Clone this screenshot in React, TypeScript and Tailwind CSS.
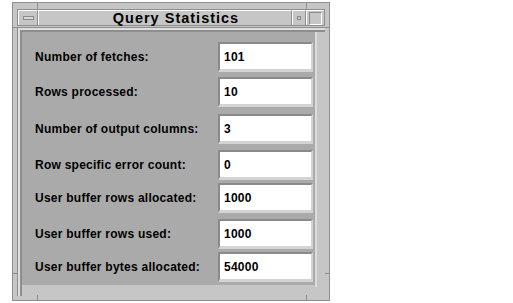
import React from "react";

const rows: { label: string; value: string; gap: string }[] = [
  { label: "Number of fetches:", value: "101", gap: "mt-0" },
  { label: "Rows processed:", value: "10", gap: "mt-[5px]" },
  { label: "Number of output columns:", value: "3", gap: "mt-[7px]" },
  { label: "Row specific error count:", value: "0", gap: "mt-[6px]" },
  { label: "User buffer rows allocated:", value: "1000", gap: "mt-[3px]" },
  { label: "User buffer rows used:", value: "1000", gap: "mt-[6px]" },
  { label: "User buffer bytes allocated:", value: "54000", gap: "mt-[3px]" },
];

const StatRow = ({ label, value, gap }: { label: string; value: string; gap: string }) => (
  <div className={`flex items-center h-[30px] ${gap}`}>
    <span className="w-[196px] pl-[13px] text-[12px] font-bold text-black leading-none tracking-[0.25px]">{label}</span>
    <div className="w-[95px] h-[30px] bg-white border-t-2 border-l-2 border-b-[3px] border-r-2 border-t-[#8a8a8a] border-l-[#8a8a8a] border-b-[#d4d4d4] border-r-[#d4d4d4] flex items-center pl-[4px]">
      <span className="text-[12px] font-bold text-black leading-none tracking-[0.25px]">{value}</span>
    </div>
  </div>
);

const Btn = ({ w, children, last }: { w: string; children?: React.ReactNode; last?: boolean }) => (
  <div className={`${w} flex items-center justify-center border-t border-l border-t-white border-l-white ${last ? "" : "border-r border-r-[#8e8e8e]"}`}>
    {children}
  </div>
);

export default function App() {
  return (
    <div className="w-[513px] h-[303px] bg-white pt-[2px] pl-[12px]" style={{ fontFamily: '"Liberation Sans", Arial, sans-serif' }}>
      {/* window frame */}
      <div className="relative w-[318px] h-[299px] bg-[#c6c6c6] border border-[#8e8e8e] pt-[6px] px-[4px] pb-[4px] flex flex-col">
        {/* resize corner marks */}
        <div className="absolute left-[24px] top-0 w-px h-[6px] bg-[#8e8e8e]" />
        <div className="absolute right-[22px] top-0 w-px h-[6px] bg-[#8e8e8e]" />
        <div className="absolute left-[24px] bottom-0 w-px h-[5px] bg-[#8e8e8e]" />
        <div className="absolute right-[22px] bottom-0 w-px h-[5px] bg-[#8e8e8e]" />
        <div className="absolute left-0 top-[24px] h-px w-[4px] bg-[#8e8e8e]" />
        <div className="absolute right-0 top-[24px] h-px w-[4px] bg-[#8e8e8e]" />
        <div className="absolute left-0 bottom-[26px] h-px w-[4px] bg-[#8e8e8e]" />
        <div className="absolute right-0 bottom-[26px] h-px w-[4px] bg-[#8e8e8e]" />

        {/* title bar */}
        <div className="flex h-[17px] border border-[#8e8e8e]">
          <Btn w="w-[20px]">
            <div className="w-[11px] h-[4px] border border-[#8a8a8a] bg-[#d8d8d8]" />
          </Btn>
          <Btn w="flex-1">
            <span className="pl-[22px] text-[14.5px] font-bold text-black leading-none tracking-[1px]">Query Statistics</span>
          </Btn>
          <Btn w="w-[14px]">
            <div className="w-[4px] h-[4px] border border-[#8a8a8a]" />
          </Btn>
          <Btn w="w-[18px]" last>
            <div className="w-[13px] h-[13px] border border-[#8a8a8a] border-r-white border-b-white" />
          </Btn>
        </div>

        {/* client area */}
        <div className="flex-1 mt-[1px] border-t border-l border-[#8e8e8e] flex">
          <div className="flex-1 border-t-2 border-l-2 border-[#dedede] flex">
            <div className="flex-1 border-t-2 border-l-2 border-[#8e8e8e] flex items-start">
              <div className="w-[293px] h-[253px] bg-[#aaaaaa] pt-[10px]">
                {rows.map((r) => (
                  <StatRow key={r.label} {...r} />
                ))}
              </div>
              <div className="w-[2px] h-[255px] bg-[#dcdcdc]" />
            </div>
          </div>
        </div>
      </div>
    </div>
  );
}
